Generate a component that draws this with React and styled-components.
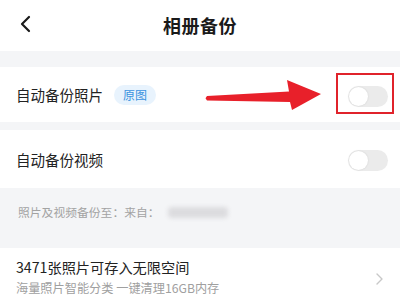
import React from "react";
import styled, { createGlobalStyle } from "styled-components";

const Global = createGlobalStyle`
  html, body { margin: 0; padding: 0; }
  body {
    width: 400px; height: 305px; overflow: hidden;
    background: #f4f5f7;
    font-family: "Noto Sans CJK SC", "Noto Sans", sans-serif;
  }
`;

const Page = styled.div`
  width: 400px;
  height: 305px;
  display: flex;
  flex-direction: column;
  background: #f4f5f7;
  overflow: hidden;
`;

const Header = styled.div`
  height: 51px;
  flex: none;
  background: #fff;
  display: flex;
  align-items: center;
  justify-content: center;
  position: relative;
`;

const Back = styled.div`
  position: absolute;
  left: 18px;
  top: 14px;
  width: 16px;
  height: 20px;
  display: flex;
`;

const Title = styled.div`
  font-size: 18px;
  font-weight: 700;
  color: #1a1a1a;
  letter-spacing: 0.5px;
  margin-top: -2px;
`;

const Gap = styled.div`
  height: ${(p) => p.h}px;
  flex: none;
`;

const Row = styled.div`
  height: ${(p) => p.h}px;
  flex: none;
  background: #fff;
  display: flex;
  align-items: center;
  padding: 0 12px 0 16px;
  position: relative;
`;

const Label = styled.div`
  font-size: 14.5px;
  color: #222;
  flex: 1;
  display: flex;
  align-items: center;
  gap: 11px;
`;

const Tag = styled.span`
  font-size: 12px;
  color: #3b93e0;
  background: #e8f3fd;
  border-radius: 10px;
  padding: 1px 9px;
  line-height: 18px;
`;

const ToggleWrap = styled.div`
  position: relative;
  width: 40px;
  height: 21px;
  flex: none;
  margin-top: ${(p) => p.mt || 0}px;
`;

const Toggle = styled.div`
  width: 40px;
  height: 21px;
  border-radius: 11px;
  background: #ebebeb;
  position: relative;
`;

const Knob = styled.div`
  position: absolute;
  left: 1px;
  top: 1px;
  width: 19px;
  height: 19px;
  border-radius: 50%;
  background: #fff;
  box-shadow: 0 0 2px rgba(0, 0, 0, 0.12);
`;

const Highlight = styled.div`
  position: absolute;
  left: -12px;
  top: -13px;
  width: 54px;
  height: 37px;
  border: 2px solid #e0232b;
`;

const Arrow = styled.svg`
  position: absolute;
  left: 200px;
  top: 10px;
`;

const Info = styled.div`
  height: 60px;
  flex: none;
  padding: 15px 18px 0;
  box-sizing: border-box;
  display: flex;
  align-items: flex-start;
  font-size: 11.8px;
  color: #a3a3a3;
`;

const Blur = styled.span`
  display: inline-block;
  width: 60px;
  height: 11px;
  margin-top: 4px;
  margin-left: 8px;
  border-radius: 4px;
  background: #dcdcdf;
  filter: blur(2px);
`;

const TwoLine = styled.div`
  flex: 1;
  display: flex;
  flex-direction: column;
  gap: 2px;
`;

const Main = styled.div`
  font-size: 14.2px;
  color: #222;
  line-height: 20px;
`;

const Sub = styled.div`
  font-size: 12.2px;
  color: #a0a0a0;
  line-height: 18px;
`;

function ToggleSwitch({ highlight, mt }) {
  return (
    <ToggleWrap mt={mt}>
      <Toggle>
        <Knob />
      </Toggle>
      {highlight && <Highlight />}
    </ToggleWrap>
  );
}

export default function App() {
  return (
    <>
      <Global />
      <Page>
        <Header>
          <Back>
            <svg width="16" height="20" viewBox="0 0 16 20">
              <path d="M11 3 L4 10 L11 17" fill="none" stroke="#1a1a1a" strokeWidth="2.2" strokeLinecap="round" strokeLinejoin="round" />
            </svg>
          </Back>
          <Title>相册备份</Title>
        </Header>
        <Gap h={16} />
        <Row h={55}>
          <Label>
            自动备份照片
            <Tag>原图</Tag>
          </Label>
          <ToggleSwitch highlight mt={4} />
          <Arrow width="125" height="36" viewBox="0 0 125 36">
            <polygon
              points="7,19 89,14.5 87,3 121,17 92,33 90,25 7,23.5 5.5,21.2"
              fill="#e8202a"
            />
          </Arrow>
        </Row>
        <Gap h={8} />
        <Row h={58}>
          <Label>自动备份视频</Label>
          <ToggleSwitch mt={3} />
        </Row>
        <Info>
          照片及视频备份至：来自：
          <Blur />
        </Info>
        <Row h={57}>
          <TwoLine>
            <Main>3471张照片可存入无限空间</Main>
            <Sub>海量照片智能分类 一键清理16GB内存</Sub>
          </TwoLine>
          <svg width="10" height="14" viewBox="0 0 10 14" style={{ marginRight: 4, marginTop: 4 }}>
            <path d="M3 2 L8 7 L3 12" fill="none" stroke="#c8c8c8" strokeWidth="1.4" strokeLinecap="round" strokeLinejoin="round" />
          </svg>
        </Row>
      </Page>
    </>
  );
}
